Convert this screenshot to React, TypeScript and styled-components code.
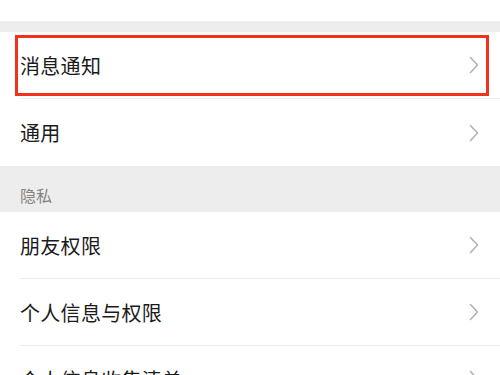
import React from "react";
import styled, { createGlobalStyle } from "styled-components";

const Global = createGlobalStyle`
  html, body { margin: 0; padding: 0; background: #ffffff; }
  body { font-family: "Noto Sans CJK SC", "Noto Sans", sans-serif; overflow: hidden; }
`;

const Page = styled.div`
  position: relative;
  width: 500px;
  height: 375px;
  overflow: hidden;
  background: #ffffff;
  display: flex;
  flex-direction: column;
`;

const TopSpace = styled.div`
  height: 21px;
  background: #ffffff;
  flex-shrink: 0;
`;

const Gap = styled.div`
  height: 11px;
  background: #ededed;
  flex-shrink: 0;
`;

const SectionHeader = styled.div`
  height: 46px;
  background: #ededed;
  flex-shrink: 0;
  display: flex;
  align-items: flex-end;
  padding: 0 0 6px 20px;
  box-sizing: border-box;
  font-size: 16px;
  color: #858585;
  line-height: 22px;
`;

const Group = styled.div`
  background: #ffffff;
  display: flex;
  flex-direction: column;
`;

const Row = styled.div<{ $last?: boolean }>`
  height: 67px;
  flex-shrink: 0;
  box-sizing: border-box;
  margin-left: 20px;
  padding-right: 21px;
  display: flex;
  align-items: center;
  justify-content: space-between;
  border-bottom: ${(p) => (p.$last ? "none" : "1px solid #ececec")};
`;

const Label = styled.span`
  font-size: 20px;
  color: #1b1b1b;
  letter-spacing: 0.3px;
`;

const Highlight = styled.div`
  position: absolute;
  left: 15px;
  top: 35px;
  width: 474px;
  height: 61px;
  box-sizing: border-box;
  border: 3px solid #f4321b;
  pointer-events: none;
`;

const Chevron = () => (
  <svg width="10" height="18" viewBox="0 0 10 18" fill="none">
    <path d="M1.5 1.5 L8.5 9 L1.5 16.5" stroke="#b3b3b3" strokeWidth="1.6" strokeLinecap="round" strokeLinejoin="round" />
  </svg>
);

const Item = ({ label, last }: { label: string; last?: boolean }) => (
  <Row $last={last}>
    <Label>{label}</Label>
    <Chevron />
  </Row>
);

export default function App() {
  return (
    <Page>
      <Global />
      <TopSpace />
      <Gap />
      <Group>
        <Item label="消息通知" />
        <Item label="通用" last />
      </Group>
      <SectionHeader>隐私</SectionHeader>
      <Group>
        <Item label="朋友权限" />
        <Item label="个人信息与权限" />
        <Item label="个人信息收集清单" />
      </Group>
      <Highlight />
    </Page>
  );
}
